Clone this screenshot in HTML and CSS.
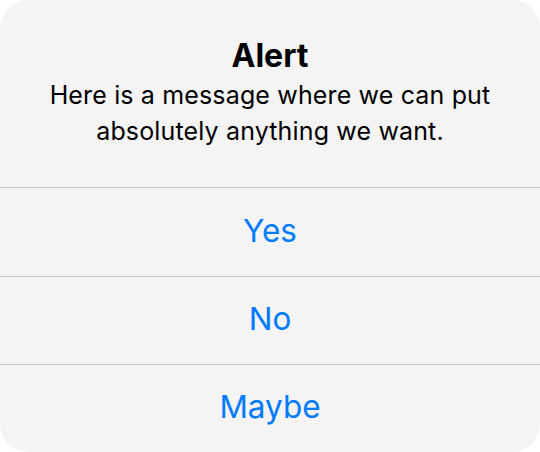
FILE: index.html
```html
<!DOCTYPE html>
<html>
<head>
<meta charset="utf-8">
<link rel="stylesheet" href="styles.css">
</head>
<body>
<div class="alert">
  <div class="header">
    <div class="title">Alert</div>
    <div class="message">Here is a message where we can put absolutely anything we want.</div>
  </div>
  <div class="actions">
    <div class="action">Yes</div>
    <div class="action">No</div>
    <div class="action">Maybe</div>
  </div>
</div>
</body>
</html>
```
FILE: styles.css
```css
html, body {
  margin: 0;
  padding: 0;
  background: #ffffff;
}
body {
  font-family: Inter, "Noto Sans", sans-serif;
}
.alert {
  width: 540px;
  height: 452px;
  background: #f4f4f4;
  border-radius: 28px;
  overflow: hidden;
  display: flex;
  flex-direction: column;
}
.header {
  height: 188px;
  box-sizing: border-box;
  padding: 36px 30px 0;
  text-align: center;
  border-bottom: 1px solid #c6c6c8;
}
.title {
  font-size: 32px;
  font-weight: 700;
  line-height: 40px;
  color: #000;
}
.message {
  font-size: 25px;
  letter-spacing: 0.15px;
  line-height: 36px;
  color: #000;
  margin-top: 1px;
}
.actions {
  display: flex;
  flex-direction: column;
  flex: 1;
}
.action {
  height: 88px;
  display: flex;
  align-items: center;
  justify-content: center;
  padding-bottom: 4px;
  font-size: 31.5px;
  color: #007aff;
  border-top: 1px solid #c6c6c8;
  box-sizing: border-box;
}
.action:first-child {
  border-top: none;
}
```
